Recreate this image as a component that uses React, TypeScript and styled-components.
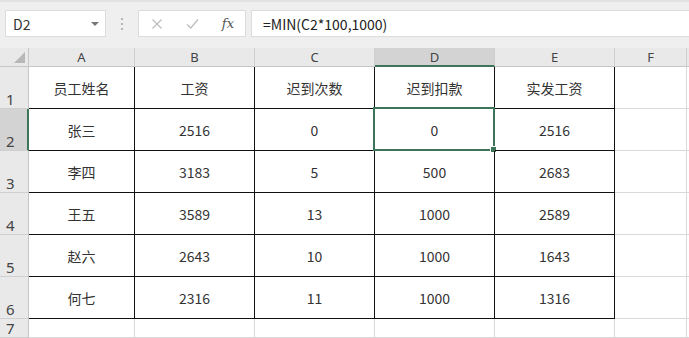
import React from 'react'
import styled, { createGlobalStyle } from 'styled-components'

const GlobalStyle = createGlobalStyle`
  html, body {
    margin: 0;
    padding: 0;
    background: #ffffff;
    overflow: hidden;
  }
  body {
    font-family: "Noto Sans CJK SC", "Noto Sans", sans-serif;
  }
`

// the last column only peeks in at the right edge, so it carries no label
const columns = ['A', 'B', 'C', 'D', 'E', 'F', '']
const colWidths = [106, 120, 120, 120, 120, 72, 40]

const rows: (string | number)[][] = [
  ['员工姓名', '工资', '迟到次数', '迟到扣款', '实发工资'],
  ['张三', 2516, 0, 0, 2516],
  ['李四', 3183, 5, 500, 2683],
  ['王五', 3589, 13, 1000, 2589],
  ['赵六', 2643, 10, 1000, 1643],
  ['何七', 2316, 11, 1000, 1316],
]

const activeCol = 3
const activeRow = 1

const Page = styled.div`
  width: 689px;
  height: 338px;
  overflow: hidden;
  background: #ffffff;
`

const FormulaBar = styled.div`
  height: 48px;
  box-sizing: border-box;
  background: #efefef;
  border-top: 2px solid #e2e2e2;
  display: flex;
  align-items: flex-start;
  padding: 8px 0 0 5px;
`

const NameBox = styled.div`
  width: 101px;
  height: 27px;
  box-sizing: border-box;
  background: #fff;
  border: 1px solid #dcdcdc;
  display: flex;
  align-items: center;
  justify-content: space-between;
  padding: 0 6px 0 7px;
  font-size: 14px;
  color: #333;
`

const Caret = styled.span`
  width: 0;
  height: 0;
  border-left: 4px solid transparent;
  border-right: 4px solid transparent;
  border-top: 4px solid #777;
`

const Dots = styled.div`
  width: 32px;
  height: 27px;
  display: flex;
  flex-direction: column;
  align-items: center;
  justify-content: center;
  gap: 3px;
  span {
    width: 2px;
    height: 2px;
    background: #b5b5b5;
  }
`

const ActionBox = styled.div`
  width: 108px;
  height: 27px;
  box-sizing: border-box;
  background: #fff;
  border: 1px solid #dcdcdc;
  display: flex;
  align-items: center;
  justify-content: space-between;
  padding: 0 11px 0 12px;
`

const Fx = styled.span`
  font-family: "DejaVu Serif", "Liberation Serif", serif;
  font-style: italic;
  font-size: 13px;
  color: #555;
`

const FormulaInput = styled.div`
  flex: 1;
  height: 27px;
  margin-left: 5px;
  box-sizing: border-box;
  background: #fff;
  border: 1px solid #dcdcdc;
  border-right: none;
  display: flex;
  align-items: center;
  padding-left: 11px;
  font-size: 14px;
  color: #222;
`

const Grid = styled.div`
  display: grid;
  grid-template-columns: 29px ${colWidths.map((w) => `${w}px`).join(' ')};
  grid-template-rows: 19px repeat(6, 42px) 19px;
`

const Corner = styled.div`
  background: #e9e9e9;
  border-right: 1px solid #c6c6c6;
  border-bottom: 1px solid #c6c6c6;
  display: flex;
  align-items: flex-end;
  justify-content: flex-end;
  padding: 0 3px 3px 0;
  box-sizing: border-box;
`

const ColHead = styled.div<{ $active?: boolean }>`
  box-sizing: border-box;
  background: ${(p) => (p.$active ? '#d3d3d3' : '#e9e9e9')};
  border-right: 1px solid #cfcfcf;
  border-bottom: ${(p) => (p.$active ? '2px solid #3d7558' : '1px solid #c6c6c6')};
  display: flex;
  align-items: center;
  justify-content: center;
  font-size: 13px;
  color: #444;
  line-height: 1;
  font-family: "Noto Sans", sans-serif;
  padding-top: ${(p) => (p.$active ? '1px' : '0')};
`

const RowHead = styled.div<{ $active?: boolean }>`
  box-sizing: border-box;
  background: ${(p) => (p.$active ? '#d3d3d3' : '#e9e9e9')};
  border-right: ${(p) => (p.$active ? '2px solid #3d7558' : '1px solid #c6c6c6')};
  border-bottom: 1px solid #cfcfcf;
  display: flex;
  align-items: flex-end;
  padding: 0 0 0 6px;
  font-size: 15px;
  line-height: 18px;
  color: #444;
  font-family: "Noto Sans", sans-serif;
`

const Cell = styled.div<{ $table?: boolean }>`
  position: relative;
  box-sizing: border-box;
  border-right: 1px solid ${(p) => (p.$table ? '#111' : '#d9d9d9')};
  border-bottom: 1px solid ${(p) => (p.$table ? '#111' : '#d9d9d9')};
  display: flex;
  align-items: center;
  justify-content: center;
  font-size: 14px;
  color: #333;
  padding-top: 1px;
`

const Selection = styled.div`
  position: absolute;
  left: -2px;
  top: -2px;
  right: -1px;
  bottom: -1px;
  border: 2px solid #3d7558;
  pointer-events: none;
`

const FillHandle = styled.span`
  position: absolute;
  right: -4px;
  bottom: -4px;
  width: 5px;
  height: 5px;
  background: #3d7558;
  border: 1px solid #fff;
`

const CornerTriangle = () => (
  <svg width="11" height="11" viewBox="0 0 11 11">
    <polygon points="11,0 11,11 0,11" fill="#b8b8b8" />
  </svg>
)

const CrossIcon = () => (
  <svg width="12" height="12" viewBox="0 0 12 12">
    <path d="M1.5 1.5 L10.5 10.5 M10.5 1.5 L1.5 10.5" stroke="#bdbdbd" strokeWidth="1.3" fill="none" />
  </svg>
)

const CheckIcon = () => (
  <svg width="13" height="12" viewBox="0 0 13 12">
    <path d="M1 6.5 L4.8 10 L12 1.5" stroke="#bdbdbd" strokeWidth="1.3" fill="none" />
  </svg>
)

const App = () => {
  return (
    <Page>
      <GlobalStyle />
      <FormulaBar>
        <NameBox>
          D2
          <Caret />
        </NameBox>
        <Dots>
          <span />
          <span />
          <span />
        </Dots>
        <ActionBox>
          <CrossIcon />
          <CheckIcon />
          <Fx>fx</Fx>
        </ActionBox>
        <FormulaInput>=MIN(C2*100,1000)</FormulaInput>
      </FormulaBar>
      <Grid>
        <Corner>
          <CornerTriangle />
        </Corner>
        {columns.map((c, i) => (
          <ColHead key={i} $active={i === activeCol}>
            {c}
          </ColHead>
        ))}
        {[...rows, []].map((row, r) => (
          <React.Fragment key={r}>
            <RowHead $active={r === activeRow}>{r + 1}</RowHead>
            {columns.map((_, ci) => {
              const inTable = r < rows.length && ci < 5
              return (
                <Cell key={ci} $table={inTable}>
                  {inTable ? row[ci] : null}
                  {r === activeRow && ci === activeCol && (
                    <Selection>
                      <FillHandle />
                    </Selection>
                  )}
                </Cell>
              )
            })}
          </React.Fragment>
        ))}
      </Grid>
    </Page>
  )
}

export default App
